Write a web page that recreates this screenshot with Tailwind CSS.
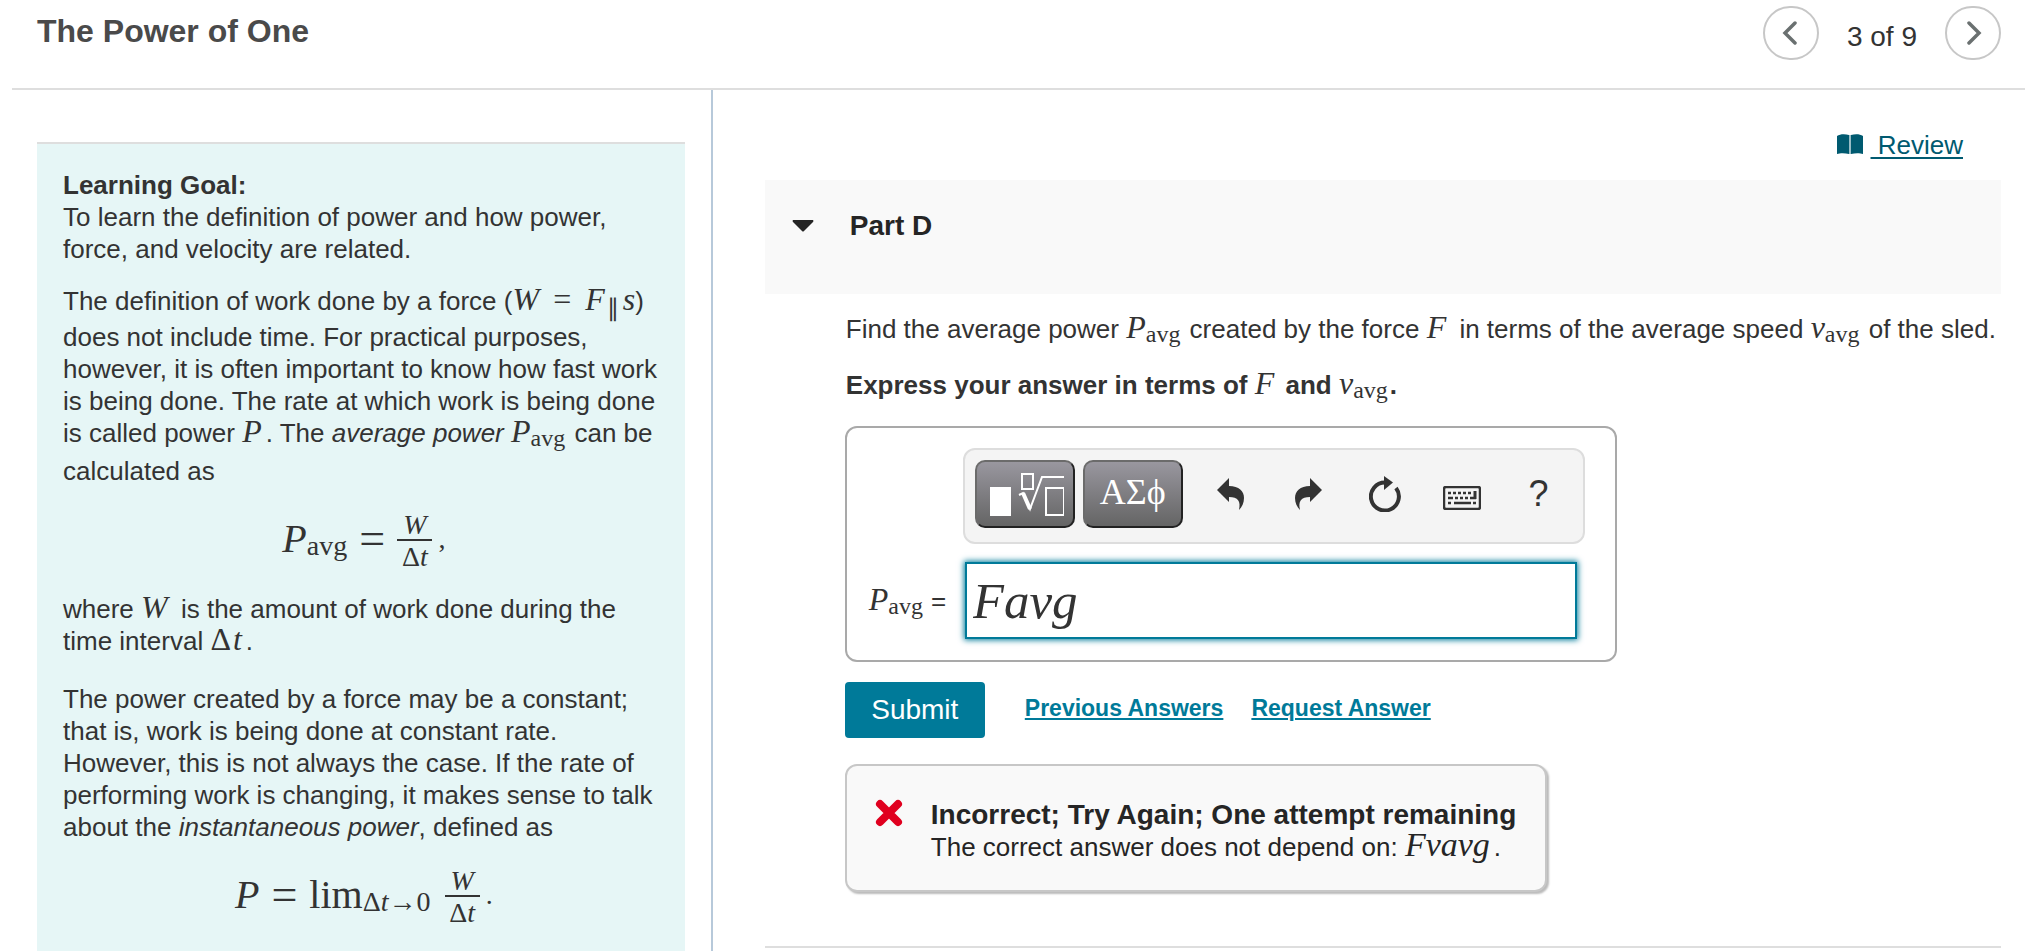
<!DOCTYPE html>
<html lang="en">
  <head>
    <meta charset="UTF-8" />
    <title>The Power of One</title>
    <meta name="viewport" content="width=device-width, initial-scale=1.0" />
    <script src="https://cdn.jsdelivr.net/npm/@tailwindcss/browser@4"></script>
  </head>

  <body class="flex flex-col min-h-screen bg-white text-[#333333] text-[26px] leading-8 font-['Liberation_Sans',Arial,sans-serif]">
    <!-- Title and item navigation -->
    <header class="flex justify-between items-start ml-3 pl-[25px] pr-6 pt-1.5 h-[90px] border-b-2 border-[#dedede]">
      <h1 class="pt-[7px] text-[32px] leading-9 font-bold text-[#4a4a4a]">The Power of One</h1>
      <nav class="flex items-center">
        <button type="button" aria-label="Previous item" class="flex items-center justify-center w-14 h-[54px] rounded-full border-2 border-[#c7c7c7]">
          <svg class="w-5 h-6" viewBox="0 0 20 24" fill="none" stroke="#6a7070" stroke-width="3.500" stroke-linecap="round" stroke-linejoin="miter"><path d="M14 2 4 12l10 10" /></svg>
        </button>
        <span class="px-7 pt-2 text-[28px]">3 of 9</span>
        <button type="button" aria-label="Next item" class="flex items-center justify-center w-14 h-[54px] rounded-full border-2 border-[#c7c7c7]">
          <svg class="w-5 h-6" viewBox="0 0 20 24" fill="none" stroke="#6a7070" stroke-width="3.500" stroke-linecap="round" stroke-linejoin="miter"><path d="M6 2l10 10L6 22" /></svg>
        </button>
      </nav>
    </header>

    <main class="flex flex-1">
      <!-- Learning goal -->
      <section class="flex w-[35.2%] shrink-0 pl-[37px] pr-[26px] pt-[52px] border-r-2 border-[#b7c9da]">
        <div class="flex-1 pl-[26px] pr-5 pt-[25px] border-t-2 border-[#dedede] bg-[#e6f6f6]">
          <p><b>Learning Goal:</b><br />To learn the definition of power and how power, force, and velocity are related.</p>
          <p class="mt-5">
            The definition of work done by a force (<span class="inline-block leading-6 pb-2.5 font-['Liberation_Serif',serif] text-[32px]"><i>W</i> <span class="mx-1.5">=</span> <i class="mr-0.5">F</i><sub class="text-[24px]">∥</sub><i class="ml-1">s</i></span>)
            does not include time. For practical purposes, however, it is often important to know how fast work is being done. The rate at which work is being done is called power
            <i class="mr-1 leading-6 font-['Liberation_Serif',serif] text-[32px]">P</i>. The <i>average power</i>
            <span class="inline-block mr-0.5 leading-6 pb-3 font-['Liberation_Serif',serif] text-[32px]"><i>P</i><sub class="-bottom-1 text-[24px]">avg</sub></span> can be calculated as
          </p>
          <div class="flex items-center justify-center mt-4 h-[72px] font-['Liberation_Serif',serif] text-[40px] leading-none">
            <i>P</i><sub class="text-[28px]">avg</sub>
            <span class="mx-3 text-[46px]">=</span>
            <span class="flex flex-col items-center pt-1.5 text-[28px]">
              <i class="px-1.5 leading-7 border-b-2 border-[#333333]">W</i>
              <span class="leading-8">Δ<i>t</i></span>
            </span>
            <span class="pl-1.5 text-[28px]">,</span>
          </div>
          <p class="mt-[18px]">
            where <i class="mr-1.5 leading-6 font-['Liberation_Serif',serif] text-[32px]">W</i> is the amount of work done during the time interval
            <span class="mr-1 leading-6 font-['Liberation_Serif',serif] text-[32px]">Δ<i class="ml-0.5">t</i></span>.
          </p>
          <p class="mt-[26px]">
            The power created by a force may be a constant; that is, work is being done at constant rate. However, this is not always the case. If the rate of performing work is changing, it makes sense to talk about the <i>instantaneous power</i>, defined as
          </p>
          <div class="flex items-center justify-center mt-4 h-[72px] font-['Liberation_Serif',serif] text-[40px] leading-none">
            <i>P</i>
            <span class="mx-3 text-[46px]">=</span>
            <span>lim</span><sub class="text-[28px]">Δ<i>t</i>→0</sub>
            <span class="flex flex-col items-center ml-3.5 pt-1.5 text-[28px]">
              <i class="px-1.5 leading-7 border-b-2 border-[#333333]">W</i>
              <span class="leading-8">Δ<i>t</i></span>
            </span>
            <span class="pl-1.5 text-[28px]">.</span>
          </div>
        </div>
      </section>

      <!-- Question part -->
      <section class="flex-1 min-w-0 pl-[52px] pr-6 pt-[39px]">
        <div class="flex justify-end pr-[38px]">
          <a href="#" class="flex items-center gap-2 text-[#005a70]">
            <svg class="w-[26px] h-[22px]" viewBox="0 0 26 22" fill="#005a70"><path d="M0 2C3 0 8 0 12 1v19c-4-1-9-1-12 0zM14 1c4-1 9-1 12 1v18c-3-1-8-1-12 0z" /><path d="M12 1h2v19h-2z" opacity=".4" /></svg>
            <span class="whitespace-pre underline decoration-2 underline-offset-3"> Review</span>
          </a>
        </div>

        <div class="flex items-start gap-9 mt-[19px] h-[114px] pl-[27px] pt-[30px] bg-[#f9f9f9] text-[#252525]">
          <button type="button" aria-label="Collapse part" class="pt-2.5">
            <svg class="w-[22px] h-3" viewBox="0 0 22 12" fill="#252525"><path d="M1 0h20q1 1 0 2l-9 9q-1 1-2 0L1 2Q0 1 1 0z" /></svg>
          </button>
          <h2 class="text-[28px] font-bold">Part D</h2>
        </div>

        <div class="pl-20">
          <p class="mt-[19px] pl-px">
            Find the average power
            <span class="inline-block mr-0.5 leading-6 pb-3 font-['Liberation_Serif',serif] text-[32px]"><i>P</i><sub class="-bottom-1 text-[24px]">avg</sub></span>
            created by the force <i class="mr-1.5 leading-6 font-['Liberation_Serif',serif] text-[32px]">F</i> in terms of the average speed
            <span class="inline-block mr-0.5 leading-6 pb-3 font-['Liberation_Serif',serif] text-[32px]"><i>v</i><sub class="-bottom-1 text-[24px]">avg</sub></span> of the sled.
          </p>
          <p class="mt-[18px] pl-px font-bold">
            Express your answer in terms of <i class="mr-1 leading-6 font-normal font-['Liberation_Serif',serif] text-[32px]">F</i> and
            <span class="inline-block mr-0.5 leading-6 pb-3 font-normal font-['Liberation_Serif',serif] text-[32px]"><i>v</i><sub class="-bottom-1 text-[24px]">avg</sub></span>.
          </p>

          <form id="answerForm">
            <div class="max-w-[772px] mt-[19px] pl-[22px] pr-[30px] pt-5 pb-[21px] border-2 border-[#a9a9a9] rounded-xl">
              <div class="flex items-center ml-[94px] h-24 pl-2.5 pr-1.5 pb-1 border-2 border-[#dddddd] rounded-xl bg-[#f4f4f4]">
                <button type="button" aria-label="Templates" class="flex items-center justify-center w-[100px] h-[68px] mr-2 pl-0.5 border-2 border-t-[#6b6b6b] border-l-[#6b6b6b] border-r-[#222222] border-b-[#222222] rounded-[10px] bg-linear-to-b from-[#99979f] to-[#656565]">
                  <svg class="w-[76px] h-11" viewBox="0 0 76 44" fill="none" stroke="#ffffff" stroke-width="2"><path d="M2 15h21v29H2z" fill="#ffffff" stroke="none" /><path d="M34 2h11v15H34zM58 16h18v27H58z" /><path d="M31 23l4-2 7 16L54 5h24" /><path d="M35 21l7 16" stroke-width="4" /></svg>
                </button>
                <button type="button" class="w-[100px] h-[68px] pb-1 border-2 border-t-[#6b6b6b] border-l-[#6b6b6b] border-r-[#222222] border-b-[#222222] rounded-[10px] bg-linear-to-b from-[#99979f] to-[#656565] text-white text-[36px] font-['Liberation_Serif',serif]">ΑΣϕ</button>
                <div class="grid flex-1 grid-cols-5 items-center justify-items-center pl-2.5">
                  <button type="button" aria-label="Undo">
                    <svg class="w-7 h-8" viewBox="0 0 28 32" fill="#333333"><path d="M0 12 12 0v8c10 0 15 5 15 12 0 5-2 9-5 12 2-9-1-13-10-13v5z" /></svg>
                  </button>
                  <button type="button" aria-label="Redo">
                    <svg class="w-7 h-8" viewBox="0 0 28 32" fill="#333333"><path d="M28 12 16 0v8C6 8 1 13 1 20c0 5 2 9 5 12-2-9 1-13 10-13v5z" /></svg>
                  </button>
                  <button type="button" aria-label="Reset">
                    <svg class="w-8 h-9" viewBox="0 0 32 36"><path d="M16 6.500A14 14 0 1 0 27 12" fill="none" stroke="#333333" stroke-width="4" /><path d="M15 0l9 6.500-9 7.500z" fill="#333333" /></svg>
                  </button>
                  <button type="button" aria-label="Keyboard shortcuts" class="pt-2">
                    <svg class="w-[38px] h-6" viewBox="0 0 38 24" fill="none" stroke="#333333"><rect x="1" y="1" width="36" height="22" rx="2" stroke-width="2.500" /><path d="M5 7h3m2 0h3m2 0h3m2 0h3m2 0h3M5 12h5m2 0h3m2 0h3m2 0h3m2 0h6M5 17h3m3 0h17m2 0h3" stroke-width="2.500" /><path d="M32 5v8" stroke-width="3" /></svg>
                  </button>
                  <button type="button" aria-label="Help" class="text-[36px]">?</button>
                </div>
              </div>
              <div class="flex items-center mt-[18px]">
                <label for="answer" class="w-24 shrink-0"><i class="leading-6 font-['Liberation_Serif',serif] text-[32px]">P</i><sub class="-bottom-1 mr-2 text-[24px] font-['Liberation_Serif',serif]">avg</sub>=</label>
                <input id="answer" type="text" value="Favg" class="flex-1 min-w-0 h-[77px] mr-2 px-1.5 border-2 border-[#007a99] bg-white outline-none shadow-[0_0_6px_1px_#007a99] text-[51px] italic font-['Liberation_Serif',serif]" />
              </div>
            </div>
            <div class="flex items-center mt-5">
              <button type="submit" class="w-[140px] h-14 rounded bg-[#007a99] text-white text-[28px]">Submit</button>
              <a href="#" class="ml-10 pb-1 text-[23px] font-bold text-[#007a99] underline decoration-2 underline-offset-2">Previous Answers</a>
              <a href="#" class="ml-7 pb-1 text-[23px] font-bold text-[#007a99] underline decoration-2 underline-offset-2">Request Answer</a>
            </div>
          </form>

          <!-- Feedback -->
          <div class="flex items-start max-w-[702px] h-[128px] mt-[26px] pl-7 pt-[33px] border-2 border-[#c7c7c7] rounded-xl bg-[#f9f9f9] shadow-[2px_2px_2px_#bbbbbb] text-[#252525]">
            <svg class="w-7 h-7 mr-7" viewBox="0 0 28 28" fill="none" stroke="#e0001f" stroke-width="8" stroke-linecap="round"><path d="M5 5l18 18M23 5 5 23" /></svg>
            <div>
              <h3 class="text-[28px] font-bold">Incorrect; Try Again; One attempt remaining</h3>
              <p>The correct answer does not depend on: <i class="mr-1 leading-6 font-['Liberation_Serif',serif] text-[34px]">Fνavg</i>.</p>
            </div>
          </div>
        </div>

        <hr class="mt-[54px] border-t-2 border-[#dedede]" />
      </section>
    </main>
  </body>
</html>
